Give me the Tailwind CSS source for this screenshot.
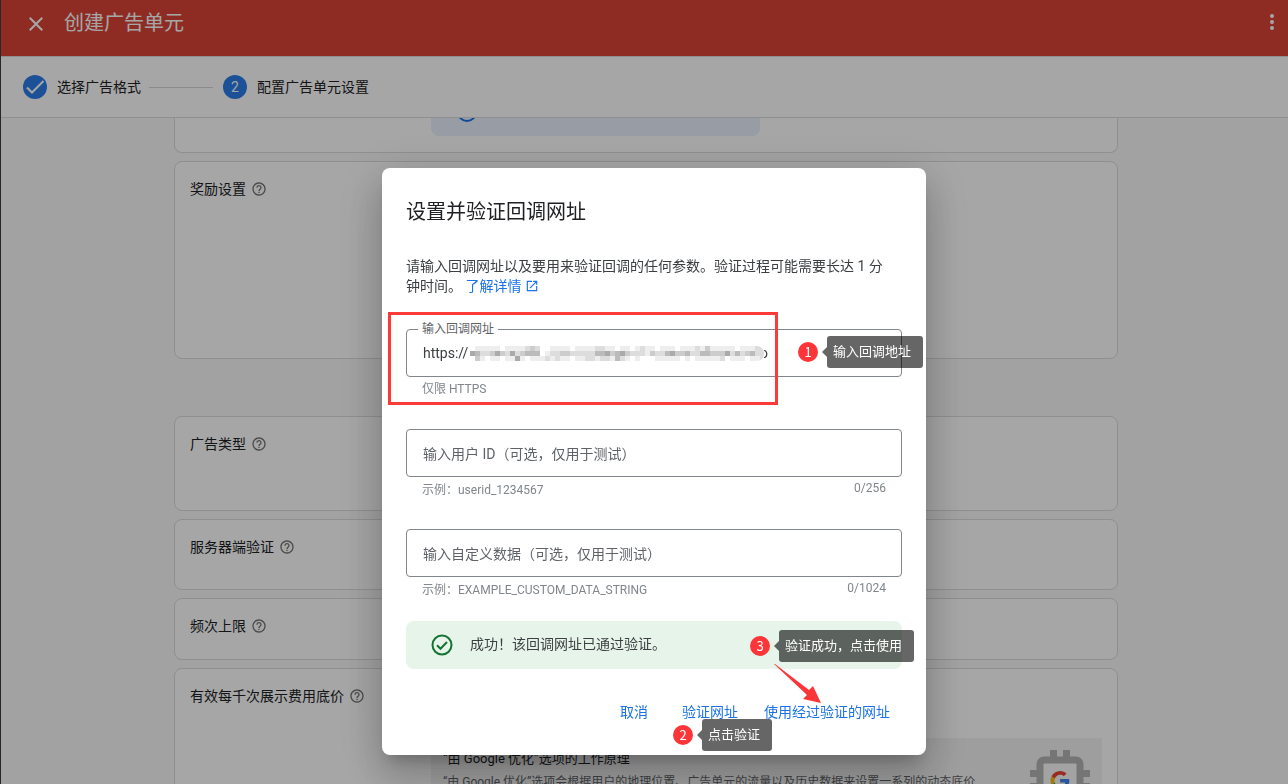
<!DOCTYPE html>
<html lang="zh-CN">
<head>
<meta charset="utf-8">
<title>创建广告单元</title>
<script src="https://cdn.jsdelivr.net/npm/@tailwindcss/browser@4"></script>
</head>
<body class="h-screen overflow-hidden bg-[#f9f9f9] font-['Roboto','Noto_Sans_CJK_SC',sans-serif] text-sm text-[#202124]">
<svg class="hidden">
  <symbol id="help" viewBox="0 0 24 24"><path d="M11 18h2v-2h-2v2zm1-16C6.48 2 2 6.48 2 12s4.480 10 10 10 10-4.480 10-10S17.520 2 12 2zm0 18c-4.410 0-8-3.590-8-8s3.590-8 8-8 8 3.590 8 8-3.590 8-8 8zm0-14c-2.210 0-4 1.790-4 4h2c0-1.100.9-2 2-2s2 .9 2 2c0 2-3 1.750-3 5h2c0-2.250 3-2.500 3-5 0-2.210-1.790-4-4-4z"/></symbol>
</svg>

<div class="flex h-full flex-col overflow-hidden border-l border-[#3c3c3c]">
  <header class="flex h-14 shrink-0 items-center bg-[#db4437] pr-2 pl-6 text-white">
    <button class="flex size-6 items-center justify-center" aria-label="关闭">
      <svg class="size-6" viewBox="0 0 24 24" fill="currentColor"><path d="M19 6.410L17.590 5 12 10.590 6.410 5 5 6.410 10.590 12 5 17.590 6.410 19 12 13.410 17.590 19 19 17.590 13.410 12z" transform="translate(-1 -4)"/></svg>
    </button>
    <h1 class="-mt-2.5 ml-[15px] text-xl">创建广告单元</h1>
    <button class="-mt-3 ml-auto flex h-6 w-4 items-center justify-center" aria-label="更多">
      <svg class="h-4 w-1" viewBox="0 0 4 16" fill="currentColor"><circle cx="2" cy="2" r="2"/><circle cx="2" cy="8" r="2"/><circle cx="2" cy="14" r="2"/></svg>
    </button>
  </header>

  <nav class="flex h-[62px] shrink-0 items-center border-y border-[#dadce0] bg-white pl-[22px]">
    <span class="flex size-6 items-center justify-center rounded-full bg-[#2b7de9] text-white">
      <svg class="size-6" viewBox="0 0 24 24" fill="none" stroke="currentColor" stroke-width="2"><path d="M4 12.500l5 5L20.500 6"/></svg>
    </span>
    <span class="ml-2.5">选择广告格式</span>
    <span class="mx-2 h-px w-16 bg-[#d6d6d6]"></span>
    <span class="ml-0.5 flex size-6 items-center justify-center rounded-full bg-[#2b7de9] text-white">2</span>
    <span class="ml-2.5">配置广告单元设置</span>
  </nav>

  <main class="mx-auto flex w-full max-w-[947px] grow flex-col gap-2 overflow-hidden pl-[3px]">
    <section class="h-[35px] shrink-0 rounded-b-lg border border-t-0 border-[#dadce0] bg-white pl-64">
      <div class="flex h-[18px] w-[329px] items-end overflow-hidden rounded-b-lg bg-[#e8f0fe] pb-3 pl-6">
        <svg class="size-6 shrink-0" viewBox="0 0 24 24" fill="none" stroke="#1a73e8" stroke-width="2"><circle cx="12" cy="12" r="9"/></svg>
      </div>
    </section>
    <section class="h-[198px] shrink-0 rounded-lg border border-[#dadce0] bg-white px-[15px] pt-[17px]">
      <h2 class="flex items-center gap-[5px]">奖励设置<svg class="size-4 fill-[#757575]"><use href="#help"/></svg></h2>
    </section>
    <section class="mt-[49px] h-[95px] shrink-0 rounded-lg border border-[#dadce0] bg-white px-[15px] pt-[17px]">
      <h2 class="flex items-center gap-[5px]">广告类型<svg class="size-4 fill-[#757575]"><use href="#help"/></svg></h2>
    </section>
    <section class="h-[71px] shrink-0 rounded-lg border border-[#dadce0] bg-white px-[15px] pt-[17px]">
      <h2 class="flex items-center gap-[5px]">服务器端验证<svg class="size-4 fill-[#757575]"><use href="#help"/></svg></h2>
    </section>
    <section class="h-[62px] shrink-0 rounded-lg border border-[#dadce0] bg-white px-[15px] pt-[17px]">
      <h2 class="flex items-center gap-[5px]">频次上限<svg class="size-4 fill-[#757575]"><use href="#help"/></svg></h2>
    </section>
    <section class="h-[240px] shrink-0 rounded-lg border border-[#dadce0] bg-white px-[15px] pt-[17px]">
      <h2 class="flex items-center gap-[5px]">有效每千次展示费用底价<svg class="size-4 fill-[#757575]"><use href="#help"/></svg></h2>
      <div class="mt-8 ml-[241px] flex h-40 items-start justify-between bg-[#f3f3f3] pt-3 pr-3 pl-3">
        <div>
          <h3 class="text-[13px] leading-[18px]">“由 Google 优化”选项的工作原理</h3>
          <p class="mt-1 text-xs leading-5 text-[#5f6368]">“由 Google 优化”选项会根据用户的地理位置、广告单元的流量以及历史数据来设置一系列的动态底价</p>
        </div>
        <svg class="h-[72px] w-[60px] shrink-0" viewBox="0 0 60 72">
          <path fill="#b4b4b4" d="M20 0h7v7h-7zM33 0h7v7h-7zM0 20h8v7H0zM0 33h8v7H0zM52 20h8v7h-8zM52 33h8v7h-8z"/>
          <rect x="10" y="10" width="40" height="46" rx="4" fill="#fafafa" stroke="#b4b4b4" stroke-width="7"/>
          <g transform="translate(20.500 21) scale(.4)">
            <path fill="#EA4335" d="M24 9.500c3.540 0 6.710 1.220 9.210 3.600l6.850-6.850C35.900 2.380 30.470 0 24 0 14.620 0 6.510 5.380 2.560 13.220l7.980 6.190C12.430 13.720 17.740 9.500 24 9.500z"/>
            <path fill="#4285F4" d="M46.980 24.550c0-1.570-.15-3.090-.38-4.550H24v9.020h12.940c-.58 2.960-2.260 5.480-4.780 7.180l7.730 6c4.510-4.180 7.090-10.360 7.090-17.650z"/>
            <path fill="#FBBC05" d="M10.530 28.590c-.48-1.450-.76-2.990-.76-4.590s.27-3.140.76-4.590l-7.980-6.190C.92 16.460 0 20.120 0 24s.92 7.540 2.560 10.780l7.970-6.190z"/>
            <path fill="#34A853" d="M24 48c6.480 0 11.930-2.130 15.890-5.810l-7.730-6c-2.150 1.450-4.920 2.300-8.160 2.300-6.260 0-11.570-4.220-13.470-9.910l-7.980 6.190C6.510 42.620 14.620 48 24 48z"/>
          </g>
        </svg>
      </div>
    </section>
  </main>
</div>

<div class="fixed inset-0 flex items-start justify-center overflow-hidden bg-black/35 pt-[168px] pl-5">
  <div role="dialog" aria-labelledby="dlg-title" class="relative w-[544px] rounded-lg bg-white px-6 pt-6 pb-[25px] shadow-[0_11px_15px_-7px_rgba(0,0,0,0.2),0_24px_38px_3px_rgba(0,0,0,0.14),0_9px_46px_8px_rgba(0,0,0,0.12)]">
    <h2 id="dlg-title" class="text-xl leading-10">设置并验证回调网址</h2>
    <p class="mt-6 leading-5 text-[#3c4043]">请输入回调网址以及要用来验证回调的任何参数。验证过程可能需要长达 1 分<br>钟时间。
      <a href="#" class="inline-flex items-center gap-1 text-[#1a73e8]">了解详情<svg class="size-3.5" viewBox="0 0 24 24" fill="currentColor"><path d="M19 19H5V5h7V3H3v18h18v-9h-2v7zM14 3v2h3.590l-9.830 9.830 1.410 1.410L19 6.410V10h2V3h-7z"/></svg></a>
    </p>

    <div class="relative mt-[33px]">
      <label for="url" class="absolute -top-2.5 left-3 bg-white px-1 text-xs leading-5 text-[#5f6368]">输入回调网址</label>
      <input id="url" type="text" value="https://" class="block h-12 w-full rounded border border-[#80868b] px-4 text-[#3c4043] outline-none">
      <div class="absolute top-3.5 left-[61px] flex h-5 items-center text-[#3c4043]">
        <svg id="mask" class="h-[15px] w-[297px]" viewBox="0 0 297 15" shape-rendering="crispEdges" aria-hidden="true">
          <clipPath id="pill"><rect width="297" height="15" rx="7"/></clipPath>
          <g id="mosaic" clip-path="url(#pill)"></g>
        </svg>
        <span class="-ml-1 pr-1 [clip-path:inset(0_0_0_4px)]">o</span>
      </div>
      <p class="pt-px pl-4 text-xs leading-[23px] text-[#80868b]">仅限 HTTPS</p>
    </div>

    <div class="mt-7">
      <input id="uid" type="text" aria-label="输入用户 ID" placeholder="输入用户 ID（可选，仅用于测试）" class="block h-12 w-full rounded border border-[#80868b] px-4 pt-0.5 outline-none placeholder:text-[#5f6368]">
      <div class="flex h-6 justify-between px-4 pt-0.5 text-xs text-[#80868b]"><span class="leading-[22px]">示例：userid_1234567</span><span class="leading-[18px]">0/256</span></div>
    </div>

    <div class="mt-7">
      <input id="custom" type="text" aria-label="输入自定义数据" placeholder="输入自定义数据（可选，仅用于测试）" class="block h-12 w-full rounded border border-[#80868b] px-4 pt-0.5 outline-none placeholder:text-[#5f6368]">
      <div class="flex h-6 justify-between px-4 pt-0.5 text-xs text-[#80868b]"><span class="leading-[22px]">示例：EXAMPLE_CUSTOM_DATA_STRING</span><span class="leading-[18px]">0/1024</span></div>
    </div>

    <div role="status" class="mt-5 flex h-12 items-center gap-4 rounded-lg bg-[#e6f4ea] pl-6 text-[#3c4043]">
      <svg class="size-6" viewBox="0 0 24 24" fill="none" stroke="#137333" stroke-width="2"><circle cx="12" cy="12" r="9.500"/><path d="M7 12.200l3.500 3.500L17 9"/></svg>
      <span class="pb-0.5">成功！该回调网址已通过验证。</span>
    </div>

    <div class="mt-[25px] flex h-9 items-center justify-end text-[#1a73e8]">
      <button class="mr-2.5 px-3 py-2">取消</button>
      <button class="mr-0.5 px-3 py-2">验证网址</button>
      <button class="px-3 py-2">使用经过验证的网址</button>
    </div>

    <!-- Tutorial annotations over the dialog -->
    <div class="pointer-events-none absolute top-36 left-1.5 h-[93px] w-[390px] border-3 border-[#fc3a38]"></div>

    <div class="absolute top-[168px] left-[416px] flex items-center font-['Noto_Sans_CJK_SC',sans-serif] text-[13px] whitespace-nowrap text-white">
      <span class="flex size-5 items-center justify-center rounded-full bg-[#fc3538]">1</span>
      <svg class="ml-1 h-2.5 w-[5px] fill-black/60" viewBox="0 0 5 10"><path d="M5 0v10L0 5z"/></svg>
      <span class="flex h-8 items-center rounded-[3px] bg-black/60 pr-3 pb-0.5 pl-1.5">输入回调地址</span>
    </div>
    <div class="absolute top-[462px] left-[368px] flex items-center font-['Noto_Sans_CJK_SC',sans-serif] text-[13px] whitespace-nowrap text-white">
      <span class="flex size-5 items-center justify-center rounded-full bg-[#fc3538]">3</span>
      <svg class="ml-1 h-2.5 w-[5px] fill-black/60" viewBox="0 0 5 10"><path d="M5 0v10L0 5z"/></svg>
      <span class="flex h-8 items-center rounded-[3px] bg-black/60 pr-3 pb-0.5 pl-1.5">验证成功，点击使用</span>
    </div>
    <div class="absolute top-[551px] left-[291px] flex items-center font-['Noto_Sans_CJK_SC',sans-serif] text-[13px] whitespace-nowrap text-white">
      <span class="flex size-5 items-center justify-center rounded-full bg-[#fc3538]">2</span>
      <svg class="ml-1 h-2.5 w-[5px] fill-black/60" viewBox="0 0 5 10"><path d="M5 0v10L0 5z"/></svg>
      <span class="flex h-8 items-center rounded-[3px] bg-black/60 pr-3 pb-0.5 pl-1.5">点击验证</span>
    </div>
    <svg class="absolute top-[496px] left-[392px] h-10 w-12" viewBox="0 0 48 40" fill="#fc3538"><path d="M0 0L1 0 35 26 39 22 47 39 29 35 33 31z"/></svg>
  </div>
</div>

<script>
  // One hex digit per 5px cell, 0 = black, f = white.
  const rows = [
    'ffeeeeefeeeedcdffeeeefeeeeddeefeefedeefeeefeeedeceeeeefeeedd',
    'fabddcacdadcbbbfeddccdddddbbacbacdddecddbaccbddbbcccadbdcbdd',
    'ffcefeefeeaefeeededeefeeddeddebdefefffeeeeefefeeeeedfeeefeed'
  ];
  const g = document.getElementById('mosaic');
  rows.forEach((row, y) => [...row].forEach((c, x) => {
    const r = document.createElementNS('http://www.w3.org/2000/svg', 'rect');
    r.setAttribute('x', x * 5 - 2);
    r.setAttribute('y', y * 5);
    r.setAttribute('width', 5);
    r.setAttribute('height', 5);
    r.setAttribute('fill', '#' + c + c + c);
    g.appendChild(r);
  }));
</script>
</body>
</html>
